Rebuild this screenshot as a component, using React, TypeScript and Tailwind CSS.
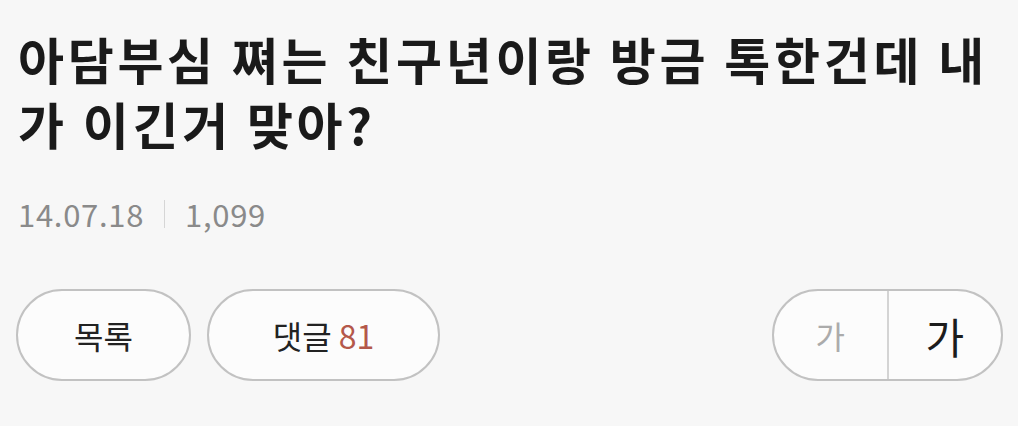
const App = () => {
  return (
    <main
      className="w-[1018px] h-[426px] bg-[#f7f7f7] overflow-hidden"
      style={{ fontFamily: '"Noto Sans CJK KR", "Noto Sans", sans-serif' }}
    >
      <section className="pl-[18px] pr-[18px] pt-[26px]">
        <h1 className="text-[50px] font-bold leading-[65px] tracking-[3.7px] text-[#1a1a1a] break-all">
          아담부심 쪄는 친구년이랑 방금 톡한건데 내가 이긴거 맞아?
        </h1>
        <div className="flex items-center mt-[37px] text-[31px] leading-[42px] tracking-[0.7px] text-[#8a8a8a]">
          <span>14.07.18</span>
          <span className="w-px h-[28px] bg-[#d6d6d6] mx-[20px]"></span>
          <span>1,099</span>
        </div>
      </section>
      <div className="flex items-center justify-between pl-[16px] pr-[15px] mt-[54px]">
        <div className="flex gap-[16px]">
          <button className="w-[175px] h-[92px] rounded-full border-2 border-[#c2c2c2] bg-[#fcfcfc] text-[32px] text-[#222]">
            목록
          </button>
          <button className="w-[233px] h-[92px] rounded-full border-2 border-[#c2c2c2] bg-[#fcfcfc] text-[32px] text-[#222]">
            댓글 <span className="text-[#b4584a]">81</span>
          </button>
        </div>
        <div className="flex w-[231px] h-[92px] rounded-full border-2 border-[#c2c2c2] bg-[#fcfcfc] overflow-hidden">
          <button className="flex-1 flex items-center justify-center text-[32px] text-[#ababab] border-r-2 border-[#d4d4d4]">
            가
          </button>
          <button className="flex-1 flex items-center justify-center text-[42px] text-[#1c1c1c]">
            가
          </button>
        </div>
      </div>
    </main>
  );
};

export default App;
